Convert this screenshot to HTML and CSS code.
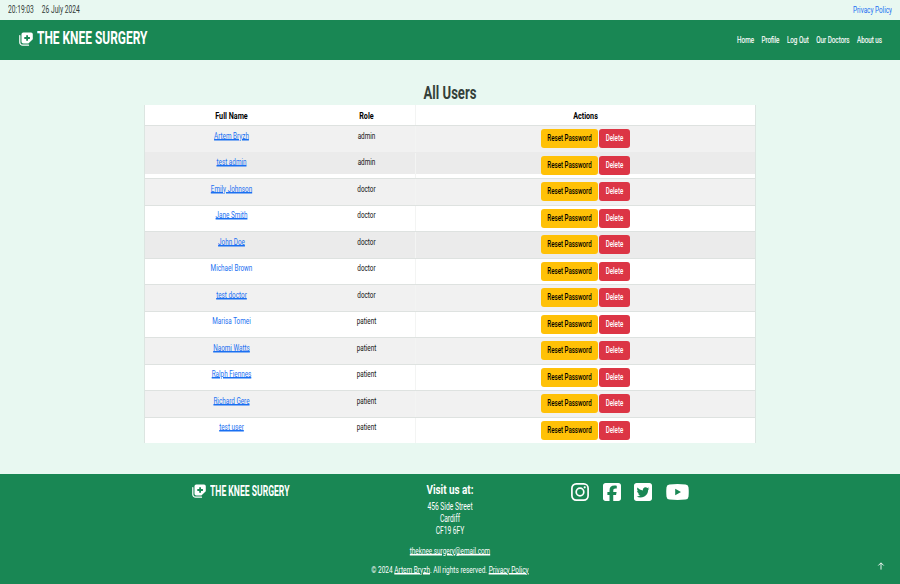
FILE: index.html
```html
<!DOCTYPE html>
<html lang="en">
<head>
<meta charset="utf-8">
<title>All Users</title>
<link rel="stylesheet" href="styles.css">
</head>
<body>
<svg class="defs" aria-hidden="true">
  <symbol id="clinic" viewBox="0 0 14 14"><path d="M.8 3.500v6.900a2.800 2.800 0 0 0 2.800 2.800h5.900" fill="none" stroke="#fff" stroke-width="1.200" stroke-linecap="round"/><path fill="#fff" fill-rule="evenodd" d="M4.300 .4h7.700a1.800 1.800 0 0 1 1.800 1.800v5l-4.400 4.400H4.300a1.800 1.800 0 0 1-1.800-1.800V2.200A1.800 1.800 0 0 1 4.300 .4zM7.200 3.200v1.900H5.300v1.800h1.900v1.900H9V6.900h1.900V5.100H9V3.200z"/></symbol>
</svg>
<div class="topbar">
  <span class="t">20:19:03</span><span class="t date">26 July 2024</span>
  <a class="t privacy" href="#">Privacy Policy</a>
</div>
<header class="navbar">
  <a class="brand" href="#"><svg class="brand-icon"><use href="#clinic"/></svg><span class="brand-name">THE KNEE SURGERY</span></a>
  <nav class="menu"><a class="t" href="#">Home</a><a class="t" href="#">Profile</a><a class="t" href="#">Log Out</a><a class="t" href="#">Our Doctors</a><a class="t" href="#">About us</a></nav>
</header>
<main>
  <h1><span class="title">All Users</span></h1>
  <div class="table">
    <div class="row head"><div><b class="t">Full Name</b></div><div><b class="t">Role</b></div><div><b class="t">Actions</b></div></div>
    <div class="row odd"><div><a class="t" href="#">Artem Bryzh</a></div><div><span class="t">admin</span></div><div class="actions"><button class="reset"><span class="t">Reset Password</span></button><button class="delete"><span class="t">Delete</span></button></div></div>
    <div class="row partial"><div><a class="t" href="#">test admin</a></div><div><span class="t">admin</span></div><div class="actions"><button class="reset"><span class="t">Reset Password</span></button><button class="delete"><span class="t">Delete</span></button></div></div>
    <div class="row odd"><div><a class="t" href="#">Emily Johnson</a></div><div><span class="t">doctor</span></div><div class="actions"><button class="reset"><span class="t">Reset Password</span></button><button class="delete"><span class="t">Delete</span></button></div></div>
    <div class="row"><div><a class="t" href="#">Jane Smith</a></div><div><span class="t">doctor</span></div><div class="actions"><button class="reset"><span class="t">Reset Password</span></button><button class="delete"><span class="t">Delete</span></button></div></div>
    <div class="row odd dark"><div><a class="t" href="#">John Doe</a></div><div><span class="t">doctor</span></div><div class="actions"><button class="reset"><span class="t">Reset Password</span></button><button class="delete"><span class="t">Delete</span></button></div></div>
    <div class="row"><div><a class="t plain" href="#">Michael Brown</a></div><div><span class="t">doctor</span></div><div class="actions"><button class="reset"><span class="t">Reset Password</span></button><button class="delete"><span class="t">Delete</span></button></div></div>
    <div class="row odd"><div><a class="t" href="#">test doctor</a></div><div><span class="t">doctor</span></div><div class="actions"><button class="reset"><span class="t">Reset Password</span></button><button class="delete"><span class="t">Delete</span></button></div></div>
    <div class="row"><div><a class="t plain" href="#">Marisa Tomei</a></div><div><span class="t">patient</span></div><div class="actions"><button class="reset"><span class="t">Reset Password</span></button><button class="delete"><span class="t">Delete</span></button></div></div>
    <div class="row odd"><div><a class="t" href="#">Naomi Watts</a></div><div><span class="t">patient</span></div><div class="actions"><button class="reset"><span class="t">Reset Password</span></button><button class="delete"><span class="t">Delete</span></button></div></div>
    <div class="row"><div><a class="t" href="#">Ralph Fiennes</a></div><div><span class="t">patient</span></div><div class="actions"><button class="reset"><span class="t">Reset Password</span></button><button class="delete"><span class="t">Delete</span></button></div></div>
    <div class="row odd"><div><a class="t" href="#">Richard Gere</a></div><div><span class="t">patient</span></div><div class="actions"><button class="reset"><span class="t">Reset Password</span></button><button class="delete"><span class="t">Delete</span></button></div></div>
    <div class="row"><div><a class="t" href="#">test user</a></div><div><span class="t">patient</span></div><div class="actions"><button class="reset"><span class="t">Reset Password</span></button><button class="delete"><span class="t">Delete</span></button></div></div>
  </div>
</main>
<footer>
  <div class="columns">
    <a class="foot-brand" href="#"><svg class="brand-icon"><use href="#clinic"/></svg><span class="brand-name">THE KNEE SURGERY</span></a>
    <div class="visit">
      <h2><span class="visit-title">Visit us at:</span></h2>
      <p><span class="t">456 Side Street</span></p>
      <p><span class="t">Cardiff</span></p>
      <p><span class="t">CF19 6FY</span></p>
      <p class="mail"><a class="t" href="#">theknee.surgery@email.com</a></p>
    </div>
    <div class="social">
      <svg width="18" height="18" viewBox="0 0 18 18"><rect x=".9" y=".9" width="16.200" height="16.200" rx="4.300" fill="none" stroke="#fff" stroke-width="1.700"/><circle cx="9" cy="9" r="3.800" fill="none" stroke="#fff" stroke-width="1.700"/><circle cx="13.700" cy="4.300" r="1.100" fill="#fff"/></svg>
      <svg width="18" height="18" viewBox="0 0 448 448"><path fill="#fff" d="M64 0C28.700 0 0 28.700 0 64v320c0 35.300 28.700 64 64 64h98.200V296.200h-52.800V224h52.800v-33.700c0-87.100 39.400-127.500 125-127.500 16.200 0 44.200 3.200 55.700 6.400v70.700c-6-.6-16.500-1-29.600-1-42 0-58.200 15.900-58.200 57.200V224h83.600l-14.400 72.200h-69.300V448H384c35.300 0 64-28.700 64-64V64c0-35.300-28.700-64-64-64H64z"/></svg>
      <svg width="18" height="18" viewBox="0 0 448 448"><path fill="#fff" fill-rule="evenodd" d="M64 0C28.700 0 0 28.700 0 64v320c0 35.300 28.700 64 64 64h320c35.300 0 64-28.700 64-64V64c0-35.300-28.700-64-64-64H64zM351.300 167.800c.2 2.800.2 5.700.2 8.500 0 86.700-66 186.600-186.600 186.600-37.200 0-71.700-10.800-100.700-29.400 5.300.6 10.400.8 15.800.8 30.700 0 58.900-10.400 81.400-28-28.800-.6-53-19.500-61.300-45.500 10.100 1.500 19.200 1.500 29.600-1.200-30-6.100-52.500-32.500-52.500-64.400v-.8c8.700 4.900 18.900 7.900 29.600 8.300a65.450 65.450 0 0 1-29.200-54.600c0-12.200 3.200-23.400 8.900-33.100 32.300 39.800 80.800 65.800 135.200 68.600-9.300-44.500 24-80.600 64-80.600 18.900 0 35.900 7.900 47.900 20.700 14.800-2.800 29-8.300 41.600-15.800-4.900 15.200-15.200 28-28.800 36.100 13.200-1.400 26-5.100 37.800-10.200-8.900 13.100-20.100 24.700-32.900 34z"/></svg>
      <svg width="23" height="16" viewBox="0 0 23 16"><path fill="#fff" fill-rule="evenodd" d="M3.500 .4Q11.500-.3 19.500 .4Q22.200 .6 22.500 3.200Q23 8 22.500 12.800Q22.200 15.400 19.500 15.600Q11.500 16.300 3.500 15.600Q.8 15.400 .5 12.800Q0 8 .5 3.200Q.8 .6 3.500 .4zM9.200 4.700v6.600L15 8z"/></svg>
    </div>
  </div>
  <p class="copy"><span class="t">© 2024 <a href="#">Artem Bryzh</a>. All rights reserved. <a href="#">Privacy Policy</a></span></p>
  <a class="to-top" href="#" aria-label="Back to top"><svg width="8" height="8" viewBox="0 0 8 8"><path d="M4 7.600V1M1.300 3.500L4 .8l2.700 2.700" fill="none" stroke="#fff" stroke-width=".9"/></svg></a>
</footer>
</body>
</html>
```
FILE: styles.css
```css
* { box-sizing: border-box; }
body {
  margin: 0;
  height: 584px;
  display: flex;
  flex-direction: column;
  overflow: hidden;
  background: #e8f8f1;
  color: #111;
  font-family: Roboto, "Liberation Sans", sans-serif;
  font-size: 6.7px;
  line-height: 12px;
}
h1, h2, p { margin: 0; }
a { color: #1a70f2; }
.defs { position: absolute; width: 0; height: 0; }
.t { display: inline-block; white-space: nowrap; transform: scaleY(1.5); text-decoration-thickness: .5px; text-underline-offset: 0; }
.topbar { height: 20px; flex: none; display: flex; align-items: center; padding: 0 8px; color: #333d39; }
.date { margin-left: 8px; }
.privacy { margin-left: auto; text-decoration: none; font-size: 6.350px; }
.navbar { height: 39.5px; flex: none; display: flex; justify-content: space-between; padding: 0 18px 0 19px; background: #198754; }
.brand, .foot-brand { display: flex; color: #fff; text-decoration: none; }
.brand { height: 36px; align-items: center; gap: 4px; }
.brand .brand-icon { width: 14px; height: 14px; margin-top: 2px; }
.brand-name { display: inline-block; white-space: nowrap; font-weight: 700; font-size: 11.950px; transform: scaleY(1.6); }
.menu { display: flex; align-items: center; gap: 7.5px; padding-top: 1px; font-size: 6.280px; }
.menu a { color: #fff; text-decoration: none; -webkit-text-stroke: .1px #fff; }
main { flex: none; height: 414.5px; padding: 22.5px 0 0 144px; }
h1 { width: 612px; height: 23px; text-align: center; line-height: 22.500px; }
.title { display: inline-block; font-weight: 700; font-size: 13.100px; transform: scaleY(1.4); color: #344039; }
.table { width: 612px; border: solid #dce5e1; border-width: 0 1px; background: #fff; }
.row { height: 26.5px; display: grid; grid-template-columns: 173px 98px 1fr; text-align: center; border-top: 1px solid #dee2e0; font-size: 6.350px; }
.row > div { padding-top: 3.500px; }
.row > div:nth-child(2) { border-right: 1px solid #f3f4f3; }
.head { height: 20px; border-top: 0; color: #000; }
.head > div { padding-top: 5px; }
.head b { font-size: 7.2px; transform: scaleY(1.35); }
.odd { background: #f1f1f1; }
.dark { background: #ebebeb; }
.partial { background: linear-gradient(#ebebeb 20.500px, #fff 20.500px); border-top-color: #ebebeb; }
.plain { text-decoration: none; }
.row .actions { display: flex; justify-content: center; gap: 1.5px; padding-top: 3px; }
button { height: 19px; padding: 0; border: 0; border-radius: 3px; font: 500 6.150px/19px Roboto, "Liberation Sans", sans-serif; }
.reset { width: 56.500px; background: #ffc107; color: #000; }
.delete { width: 30.500px; background: #dc3545; color: #fff; }
footer { position: relative; flex: 1; background: #198754; color: #fff; text-align: center; }
footer a { color: #fff; }
.columns { display: grid; grid-template-columns: 192px 188px 140px 51px 1fr; height: 90px; }
.foot-brand { grid-column: 2; height: 34px; align-items: center; gap: 4px; }
.foot-brand .brand-icon { width: 14px; height: 14px; }
.foot-brand .brand-name { font-size: 8.6px; }
.visit { grid-column: 3; }
h2 { height: 26.500px; line-height: 31px; }
.visit-title { display: inline-block; font-weight: 700; font-size: 9.9px; transform: scaleY(1.35); }
.visit p { height: 12.300px; }
.visit p.mail { margin-top: 7.500px; font-size: 6.350px; }
.social { grid-column: 5; display: flex; align-items: center; gap: 13.500px; height: 35px; }
.copy { font-size: 6.500px; }
.to-top { position: absolute; right: 15px; bottom: 14px; width: 8px; height: 8px; line-height: 0; }
```
